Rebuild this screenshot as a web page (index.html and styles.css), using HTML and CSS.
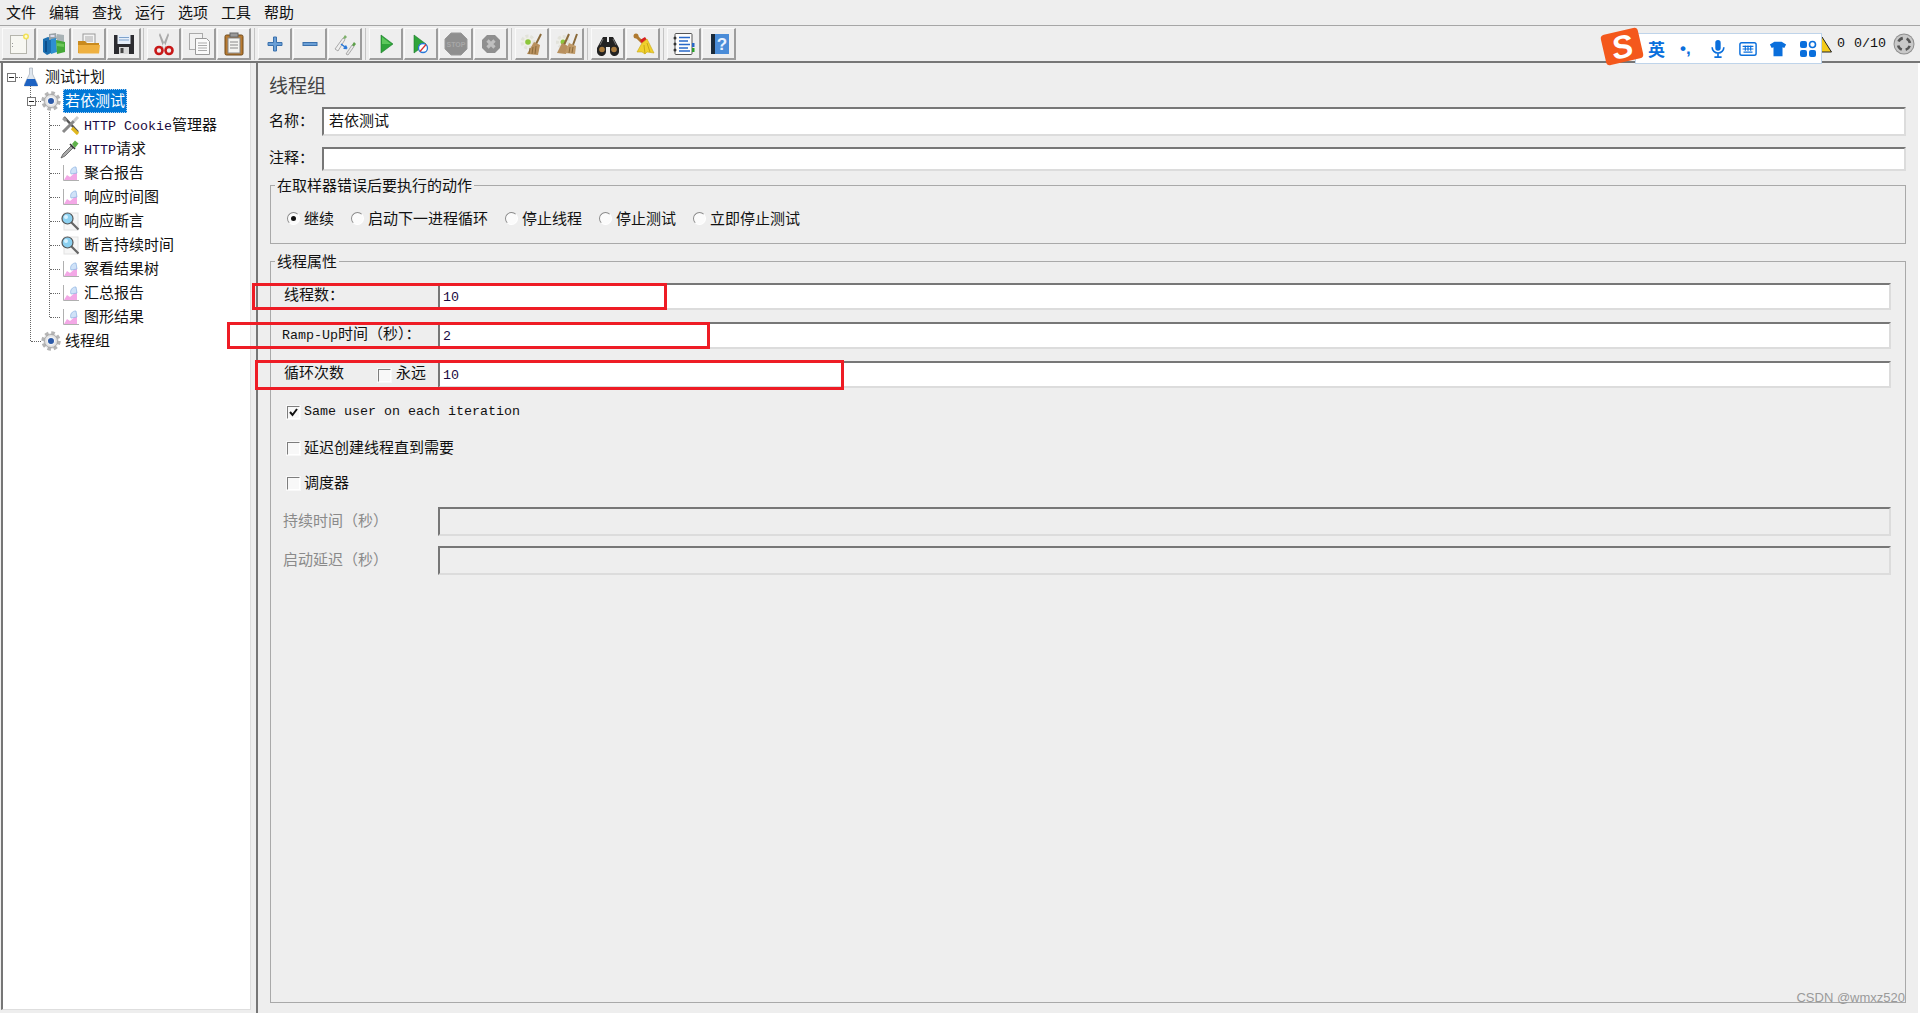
FILE: index.html
```html
<!DOCTYPE html>
<html lang="zh-CN">
<head>
<meta charset="utf-8">
<title>线程组</title>
<link rel="stylesheet" href="styles.css">
</head>
<body>
<svg class="defs" width="0" height="0" aria-hidden="true">
  <defs>
    <symbol id="i-new" viewBox="0 0 24 24"><rect x="3.5" y="3.5" width="16" height="18" fill="#f7f7f2" stroke="#b5b5ad"/><rect x="5" y="11" width="1" height="1" fill="#999"/><rect x="5" y="14" width="1" height="1" fill="#999"/><circle cx="19" cy="4.500" r="3" fill="#f2e25a"/><circle cx="19" cy="4.500" r="1.400" fill="#fffbd0"/></symbol>
    <symbol id="i-templates" viewBox="0 0 24 24"><path d="M1 7l5-2 3 1v15l-4 2-4-3z" fill="#1c6fb0"/><rect x="3" y="9" width="2" height="11" fill="#0d4f8c"/><path d="M7 2l7-1 1 6-8 1z" fill="#9aa3a8"/><rect x="8.500" y="3" width="4" height="2" fill="#dde"/><path d="M15 2l7 1v8l-7-1z" fill="#a8b2b5"/><path d="M9 7l5-1 1 14-6 2z" fill="#2e8fd0"/><path d="M14 8l9 2v10l-8 2z" fill="#46a838"/><path d="M15 11l7 1v3l-7-1z" fill="#6cc858"/></symbol>
    <symbol id="i-open" viewBox="0 0 24 24"><rect x="6" y="2" width="12" height="11" fill="#f4f4f4" stroke="#999"/><path d="M8 5h8M8 7h8M8 9h8" stroke="#aaa"/><path d="M1 9h7l2 2h12v10H1z" fill="#c98a1e"/><path d="M1 13h22l-1 8.500H1.500z" fill="#eeb040"/></symbol>
    <symbol id="i-save" viewBox="0 0 24 24"><path d="M2 3h20v19H2z" fill="#2c2c30"/><rect x="5.500" y="3" width="13" height="9" fill="#e6eef8"/><path d="M7 5.500h10M7 8h10" stroke="#7fa3cc"/><rect x="7" y="15" width="10" height="7" fill="#d8d8d8"/><rect x="8.500" y="16" width="3" height="5" fill="#444"/></symbol>
    <symbol id="i-cut" viewBox="0 0 24 24"><path d="M8 1l6 14-2.500 1L7 3zM16 1l-6 14 2.500 1L17 3z" fill="#a9a9a9"/><circle cx="7" cy="18.500" r="3.500" fill="none" stroke="#c81818" stroke-width="2.600"/><circle cx="17" cy="18.500" r="3.500" fill="none" stroke="#c81818" stroke-width="2.600"/></symbol>
    <symbol id="i-copy" viewBox="0 0 24 24"><rect x="2.500" y="1.500" width="13" height="16" fill="#f2f2f2" stroke="#aaa"/><path d="M8.500 6.500h11l3 3v13h-14z" fill="#fafafa" stroke="#999"/><path d="M11 11h9M11 13.500h9M11 16h9M11 18.500h9" stroke="#aaa"/></symbol>
    <symbol id="i-paste" viewBox="0 0 24 24"><rect x="3" y="3" width="18" height="20" rx="1.500" fill="#b87a30" stroke="#6e4a1c"/><rect x="6" y="6" width="12" height="15" fill="#f4f4f0" stroke="#888"/><rect x="8" y="1" width="8" height="4" fill="#999" stroke="#666"/><path d="M8 10h8M8 13h8M8 16h8" stroke="#888"/></symbol>
    <symbol id="i-plus" viewBox="0 0 24 24"><path d="M10.500 5h3v5.500H19v3h-5.500V19h-3v-5.500H5v-3h5.500z" fill="#6a9fd6" stroke="#3a70ac"/></symbol>
    <symbol id="i-minus" viewBox="0 0 24 24"><rect x="5" y="10.500" width="14" height="3" fill="#6a9fd6" stroke="#3a70ac"/></symbol>
    <symbol id="i-toggle" viewBox="0 0 24 24"><path d="M2 17L10 6l2 1.500L5 19z" fill="#eee" stroke="#aaa"/><path d="M10 6l2-3 2 2-2 2z" fill="#7db06a"/><path d="M13 22l6-9 2 1.500-6 8.500z" fill="#e8e8e8" stroke="#aaa"/><path d="M19 13l2-3 2 2-2 2.500z" fill="#5da04a"/><path d="M8 12l6 4.500M14 16.500l-3.500-.2M14 16.500l-1.500-3" stroke="#2878d8" stroke-width="1.500" fill="none"/></symbol>
    <symbol id="i-play" viewBox="0 0 24 24"><path d="M7 3l12 9-12 9z" fill="#2ea43a" stroke="#1b7a28" stroke-width=".6"/><path d="M8 5l9 7H8z" fill="#5cc85c"/></symbol>
    <symbol id="i-playno" viewBox="0 0 24 24"><path d="M5 3l12 9-12 9z" fill="#2ea43a" stroke="#1b7a28" stroke-width=".6"/><circle cx="14" cy="16" r="4.500" fill="#fff" stroke="#2878d8" stroke-width="1.300"/><path d="M11 19.500l6-7" stroke="#d83030" stroke-width="1.200"/></symbol>
    <symbol id="i-stop" viewBox="0 0 24 24"><path d="M7 1h10l6 6v10l-6 6H7l-6-6V7z" fill="#8f8f8f" stroke="#999"/><text x="12" y="15" text-anchor="middle" class="stop-text">STOP</text></symbol>
    <symbol id="i-shut" viewBox="0 0 24 24"><path d="M8 3h8l5 5v8l-5 5H8l-5-5V8z" fill="#8f8f8f"/><path d="M8.500 8.500l7 7M15.500 8.500l-7 7" stroke="#c0c0c0" stroke-width="3.200"/></symbol>
    <symbol id="i-clear" viewBox="0 0 24 24"><circle cx="8" cy="10" r="6" fill="#eeeee6" stroke="#e2e2da" stroke-width="3" stroke-dasharray="3 2"/><circle cx="8" cy="10" r="2.800" fill="#8cc63a"/><path d="M21 2l-5 10" stroke="#8a6a3a" stroke-width="2"/><path d="M14 10l6 3-2 10-11-1z" fill="#b8905e"/><path d="M10 16l-1 6M13 15l-1 7M16 14l-1 8" stroke="#8a6a3a"/></symbol>
    <symbol id="i-clearall" viewBox="0 0 24 24"><circle cx="8" cy="10" r="5.500" fill="#eeeee6" stroke="#e2e2da" stroke-width="3" stroke-dasharray="3 2"/><circle cx="8" cy="10" r="2.500" fill="#8cc63a"/><path d="M14 2l-5 11M22 2l-4 11" stroke="#8a6a3a" stroke-width="2"/><path d="M7 11l6 3-2 8-9-1z" fill="#b8905e"/><path d="M14 11l7 3-1 8-10-1z" fill="#c09a68"/><path d="M15 15l-1 6M18 15l-1 6" stroke="#8a6a3a"/></symbol>
    <symbol id="i-bino" viewBox="0 0 24 24"><path d="M7 5h4v5h2V5h4l6 11v3a4 4 0 0 1-9 1v-5h-4v5a4 4 0 0 1-9-1v-3z" fill="#222"/><circle cx="6" cy="17.500" r="2.800" fill="#a87a3c"/><circle cx="18" cy="17.500" r="2.800" fill="#a87a3c"/><path d="M7 7l-3 6" stroke="#777"/><path d="M17 7l3 6" stroke="#777"/></symbol>
    <symbol id="i-broom" viewBox="0 0 24 24"><circle cx="5" cy="4" r="2.500" fill="#b07a30"/><path d="M5 4l6 6" stroke="#b07a30" stroke-width="3"/><path d="M9 8l5-3 2 3-5 4z" fill="#d82020"/><path d="M11 11l5-4 7 14-7-1-2 2-3-2-5 0z" fill="#f0d02c" stroke="#c8a818" stroke-width=".6"/><path d="M13 13l1 9M16 11l3 9" stroke="#c8a818"/></symbol>
    <symbol id="i-list" viewBox="0 0 24 24"><rect x="3" y="1.500" width="17" height="21" rx="1" fill="#fdfdfd" stroke="#555"/><path d="M7 5.500h11M7 9h9M7 12.500h11M7 16h9M7 19h11" stroke="#2868c8" stroke-width="1.300"/><circle cx="3" cy="6" r="1.500" fill="#333"/><circle cx="3" cy="12" r="1.500" fill="#333"/><circle cx="3" cy="18" r="1.500" fill="#333"/><rect x="20" y="11" width="2.500" height="4" fill="#2868c8"/><rect x="20" y="16" width="2.500" height="4" fill="#2ca02c"/></symbol>
    <symbol id="i-help" viewBox="0 0 24 24"><rect x="4" y="2" width="18" height="20" fill="#4a8cd8"/><rect x="4" y="2" width="4" height="20" fill="#1a2a3a"/><text x="15" y="18" text-anchor="middle" class="help-text">?</text></symbol>
    <symbol id="t-flask" viewBox="0 0 20 20"><path d="M8.500 1h3v6l5 10v2h-13v-2l5-10z" fill="#dfe6ee" stroke="#9aa4b0" stroke-width=".6"/><path d="M6 12h8l3 7H3z" fill="#1d62c2"/></symbol>
    <symbol id="t-gear" viewBox="0 0 20 20"><circle cx="10" cy="10" r="8" fill="#e6e6e6" stroke="#b4b4b4" stroke-width="3.400" stroke-dasharray="3.500 2.783"/><circle cx="10" cy="10" r="6.500" fill="#e4e4e4" stroke="#a0a0a0" stroke-width=".8"/><circle cx="10" cy="10" r="3.600" fill="#2c5aa8" stroke="#f4f4f4" stroke-width="1.200"/></symbol>
    <symbol id="t-tools" viewBox="0 0 20 20"><path d="M4 2l14 15" stroke="#555" stroke-width="2.400"/><path d="M2 4l3-2 2 3-2 2z" fill="#999"/><path d="M14 6L3 17" stroke="#888" stroke-width="3"/><path d="M14 6l4-4" stroke="#ccc" stroke-width="3"/><path d="M12 13l6 6" stroke="#e0b820" stroke-width="3.200"/></symbol>
    <symbol id="t-pipette" viewBox="0 0 20 20"><path d="M1 19l2-4L11 7l2 2-8 8z" fill="#aaa" stroke="#555" stroke-width=".8"/><path d="M12 5l3-3.500 3.500 3L15 9z" fill="#5eb04a"/><path d="M10 5l5 5" stroke="#333" stroke-width="1.600"/></symbol>
    <symbol id="t-graph" viewBox="0 0 20 20"><path d="M3.500 2v15.500H19" fill="none" stroke="#b0b0b0"/><path d="M4 17l3-5 3 2 7-6v9z" fill="#f3a8e6"/><path d="M11 11a5 5 0 0 1 5-7l1 6z" fill="#cfe2f8" stroke="#8ab0e0" stroke-width=".7"/></symbol>
    <symbol id="t-lens" viewBox="0 0 20 20"><rect x="4" y="2" width="14" height="17" fill="#f6f6f6" stroke="#e2e2e2"/><path d="M11 11l7.500 7.500" stroke="#666" stroke-width="2.200"/><circle cx="7.500" cy="7.500" r="5.500" fill="#8cd0f0" stroke="#555" stroke-width="1.200"/><circle cx="6" cy="6" r="2" fill="#d8f2ff"/></symbol>
    <symbol id="s-warn" viewBox="0 0 20 17"><path d="M10 1l9.500 15H.5z" fill="#f5cb1a" stroke="#222"/></symbol>
    <symbol id="s-zoom" viewBox="0 0 22 22"><circle cx="11" cy="11" r="10.500" fill="#8e8e8e"/><circle cx="11" cy="11" r="9.500" fill="#c8c8c8"/><circle cx="11" cy="11" r="6" fill="none" stroke="#555" stroke-width="2.600" stroke-dasharray="5.400 4.025" stroke-dashoffset="7.400"/></symbol>
    <symbol id="m-check" viewBox="0 0 13 13"><path d="M3 6l2.500 3L10 3" fill="none" stroke="#111" stroke-width="2"/></symbol>
  </defs>
</svg>

<div class="app">
  <nav class="menubar">
    <span>文件</span><span>编辑</span><span>查找</span><span>运行</span><span>选项</span><span>工具</span><span>帮助</span>
  </nav>

  <div class="toolbar">
    <div class="tb-group">
      <span class="tb-btn"><svg class="tb-icon"><use href="#i-new"/></svg></span>
      <span class="tb-btn"><svg class="tb-icon"><use href="#i-templates"/></svg></span>
      <span class="tb-btn"><svg class="tb-icon"><use href="#i-open"/></svg></span>
      <span class="tb-btn"><svg class="tb-icon"><use href="#i-save"/></svg></span>
    </div>
    <i class="tb-sep tb-sep-first"></i>
    <div class="tb-group">
      <span class="tb-btn"><svg class="tb-icon"><use href="#i-cut"/></svg></span>
      <span class="tb-btn"><svg class="tb-icon"><use href="#i-copy"/></svg></span>
      <span class="tb-btn"><svg class="tb-icon"><use href="#i-paste"/></svg></span>
    </div>
    <i class="tb-sep"></i>
    <div class="tb-group">
      <span class="tb-btn"><svg class="tb-icon"><use href="#i-plus"/></svg></span>
      <span class="tb-btn"><svg class="tb-icon"><use href="#i-minus"/></svg></span>
      <span class="tb-btn"><svg class="tb-icon"><use href="#i-toggle"/></svg></span>
    </div>
    <i class="tb-sep"></i>
    <div class="tb-group">
      <span class="tb-btn"><svg class="tb-icon"><use href="#i-play"/></svg></span>
      <span class="tb-btn"><svg class="tb-icon"><use href="#i-playno"/></svg></span>
      <span class="tb-btn"><svg class="tb-icon"><use href="#i-stop"/></svg></span>
      <span class="tb-btn"><svg class="tb-icon"><use href="#i-shut"/></svg></span>
    </div>
    <i class="tb-sep"></i>
    <div class="tb-group">
      <span class="tb-btn"><svg class="tb-icon"><use href="#i-clear"/></svg></span>
      <span class="tb-btn"><svg class="tb-icon"><use href="#i-clearall"/></svg></span>
    </div>
    <i class="tb-sep"></i>
    <div class="tb-group">
      <span class="tb-btn"><svg class="tb-icon"><use href="#i-bino"/></svg></span>
      <span class="tb-btn"><svg class="tb-icon"><use href="#i-broom"/></svg></span>
    </div>
    <i class="tb-sep"></i>
    <div class="tb-group">
      <span class="tb-btn"><svg class="tb-icon"><use href="#i-list"/></svg></span>
      <span class="tb-btn"><svg class="tb-icon"><use href="#i-help"/></svg></span>
    </div>
    <div class="status">
      <svg class="st-warn"><use href="#s-warn"/></svg>
      <span class="lat st-count">0</span>
      <span class="lat st-threads">0/10</span>
      <svg class="st-zoom"><use href="#s-zoom"/></svg>
    </div>
  </div>

  <div class="main">
    <aside class="tree">
      <ul class="tree-list">
        <li>
          <div class="row row-root"><b class="toggle"></b><svg class="t-icon"><use href="#t-flask"/></svg><span class="t-label">测试计划</span></div>
          <ul class="tree-list lvl1">
            <li>
              <div class="row"><b class="toggle"></b><svg class="t-icon"><use href="#t-gear"/></svg><span class="t-label t-selected">若依测试</span></div>
              <ul class="tree-list lvl2">
                <li><div class="row"><b class="no-toggle"></b><svg class="t-icon"><use href="#t-tools"/></svg><span class="t-label"><span class="lat lat-tree">HTTP Cookie</span>管理器</span></div></li>
                <li><div class="row"><b class="no-toggle"></b><svg class="t-icon"><use href="#t-pipette"/></svg><span class="t-label"><span class="lat lat-tree">HTTP</span>请求</span></div></li>
                <li><div class="row"><b class="no-toggle"></b><svg class="t-icon"><use href="#t-graph"/></svg><span class="t-label">聚合报告</span></div></li>
                <li><div class="row"><b class="no-toggle"></b><svg class="t-icon"><use href="#t-graph"/></svg><span class="t-label">响应时间图</span></div></li>
                <li><div class="row"><b class="no-toggle"></b><svg class="t-icon"><use href="#t-lens"/></svg><span class="t-label">响应断言</span></div></li>
                <li><div class="row"><b class="no-toggle"></b><svg class="t-icon"><use href="#t-lens"/></svg><span class="t-label">断言持续时间</span></div></li>
                <li><div class="row"><b class="no-toggle"></b><svg class="t-icon"><use href="#t-graph"/></svg><span class="t-label">察看结果树</span></div></li>
                <li><div class="row"><b class="no-toggle"></b><svg class="t-icon"><use href="#t-graph"/></svg><span class="t-label">汇总报告</span></div></li>
                <li><div class="row"><b class="no-toggle"></b><svg class="t-icon"><use href="#t-graph"/></svg><span class="t-label">图形结果</span></div></li>
              </ul>
            </li>
            <li><div class="row"><b class="no-toggle"></b><svg class="t-icon"><use href="#t-gear"/></svg><span class="t-label">线程组</span></div></li>
          </ul>
        </li>
      </ul>
    </aside>

    <section class="panel">
      <h1 class="title">线程组</h1>
      <div class="field field-name"><label class="field-label">名称：</label><div class="input">若依测试</div></div>
      <div class="field field-note"><label class="field-label">注释：</label><div class="input"></div></div>

      <fieldset class="group group-error">
        <legend>在取样器错误后要执行的动作</legend>
        <div class="radios">
          <span class="radio-item"><i class="radio radio-on"></i>继续</span>
          <span class="radio-item"><i class="radio"></i>启动下一进程循环</span>
          <span class="radio-item"><i class="radio"></i>停止线程</span>
          <span class="radio-item"><i class="radio"></i>停止测试</span>
          <span class="radio-item"><i class="radio"></i>立即停止测试</span>
        </div>
      </fieldset>

      <fieldset class="group group-props">
        <legend>线程属性</legend>
        <div class="prop"><span class="prop-label">线程数：</span><div class="input input-num lat">10</div></div>
        <div class="prop"><span class="prop-label prop-ramp"><span class="lat">Ramp-Up</span>时间（秒）：</span><div class="input input-num lat">2</div></div>
        <div class="prop"><span class="prop-label prop-loop">循环次数<span class="forever"><i class="check"></i>永远</span></span><div class="input input-num lat">10</div></div>
        <div class="check-row check-same"><i class="check check-on"><svg class="check-mark"><use href="#m-check"/></svg></i><span class="lat">Same user on each iteration</span></div>
        <div class="check-row check-delay"><i class="check"></i>延迟创建线程直到需要</div>
        <div class="check-row check-sched"><i class="check"></i>调度器</div>
        <div class="prop prop-disabled prop-duration"><span class="prop-label">持续时间（秒）</span><div class="input input-off"></div></div>
        <div class="prop prop-disabled prop-startup"><span class="prop-label">启动延迟（秒）</span><div class="input input-off"></div></div>
      </fieldset>
    </section>
  </div>

  <div class="mark mark-a"></div>
  <div class="mark mark-b"></div>
  <div class="mark mark-c"></div>

  <div class="ime">
    <span class="ime-logo"><span class="ime-s">S</span></span>
    <span class="ime-lang">英</span>
    <span class="ime-punct">•,</span>
    <svg class="ime-icon" viewBox="0 0 18 20"><rect x="6" y="0" width="6" height="12" rx="3" fill="#0a6fdc"/><path d="M2.500 8a6.500 6.500 0 0 0 13 0M9 15v3M5 19h8" fill="none" stroke="#0a6fdc" stroke-width="1.800"/></svg>
    <svg class="ime-icon" viewBox="0 0 20 18"><rect x="1" y="2" width="18" height="14" rx="2" fill="none" stroke="#0a6fdc" stroke-width="1.600"/><path d="M4 6h12M4 9h12M5 12.500h10M7 5v6M10 5v6M13 5v6" stroke="#0a6fdc" stroke-width="1.300"/></svg>
    <svg class="ime-icon" viewBox="0 0 20 18"><path d="M6 1h8l5 3-2 4-2-1v10H5V7L3 8 1 4z" fill="#0a6fdc"/></svg>
    <svg class="ime-icon" viewBox="0 0 18 18"><rect x="1" y="1" width="7" height="7" rx="2" fill="#0a6fdc"/><rect x="10.500" y="1.500" width="6" height="6" rx="3" fill="none" stroke="#0a6fdc" stroke-width="1.600"/><rect x="1" y="10" width="7" height="7" rx="2" fill="#0a6fdc"/><rect x="10" y="10" width="7" height="7" rx="2" fill="#0a6fdc"/></svg>
  </div>

  <div class="watermark">CSDN @wmxz520</div>
</div>
</body>
</html>
```

FILE: styles.css
```css
* { box-sizing: border-box; }
html, body { margin: 0; padding: 0; }
body {
  background: #eeeeee;
  color: #111;
  font: 15px/20px "Liberation Mono", "Noto Sans CJK SC", monospace;
  overflow: hidden;
}
ul { list-style: none; margin: 0; padding: 0; }
.defs { position: absolute; }
.stop-text { font: bold 7px "Liberation Sans", sans-serif; fill: #a8a8a8; }
.help-text { font: bold 17px "Liberation Sans", sans-serif; fill: #e8f2ff; }

.app { position: relative; width: 1920px; height: 1013px; display: flex; flex-direction: column; overflow: hidden; }
.lat { font-size: 13.33px; }

/* menu */
.menubar {
  height: 26px; flex: none; display: flex; gap: 13px; padding-left: 6px;
  line-height: 29px; border-bottom: 1px solid #a6a6a6;
}

/* toolbar */
.toolbar {
  height: 37px; flex: none; display: flex; align-items: flex-start;
  padding: 2px 0 0 2px; border-bottom: 2px solid #767676;
}
.tb-group { display: flex; gap: 1px; }
.tb-btn {
  width: 34px; height: 32px; display: flex; align-items: center; justify-content: center;
  background: #eeeeee;
  border-top: 1px solid #fafafa; border-left: 1px solid #fafafa;
  border-right: 2px solid #9c9c9c; border-bottom: 2px solid #9c9c9c;
}
.tb-icon { width: 24px; height: 24px; }
.tb-sep { width: 1px; height: 32px; margin: 0 3px; background: #c4c4c4; }
.tb-sep-first { margin-left: 2px; }
.status { margin-left: auto; height: 32px; display: flex; align-items: center; padding-right: 5px; }
.st-warn { width: 20px; height: 17px; margin-right: 5px; flex: none; }
.st-count { width: 8px; margin-right: 9px; }
.st-threads { width: 32px; margin-right: 7px; }
.st-zoom { width: 22px; height: 22px; }

/* main split */
.main { flex: 1; min-height: 0; display: flex; border-right: 2px solid #fff; }
.tree {
  width: 250px; margin: 0 5px 3px 1px; flex: none; background: #fff;
  border-left: 2px solid #767676; border-right: 1px solid #dedede; border-bottom: 1px solid #dedede;
  padding-top: 2px;
}
.tree-list { position: relative; }
.lvl1 { padding-left: 20px; }
.lvl1::before {
  content: ""; position: absolute; left: 27px; top: -3px; bottom: 12px;
  border-left: 1px dotted #666;
}
.lvl2 { padding-left: 19px; }
.lvl2::before {
  content: ""; position: absolute; left: 26px; top: -1px; bottom: 12px;
  border-left: 1px dotted #666;
}
.row { position: relative; height: 24px; display: flex; align-items: center; padding-left: 4px; white-space: nowrap; }
.row::before {
  content: ""; position: absolute; left: 8px; width: 10px; top: 12px;
  border-top: 1px dotted #666;
}
.row-root::before { left: 13px; width: 6px; }
.toggle {
  position: relative; width: 9px; height: 9px; flex: none; margin-right: 5px;
  background: #fff; border: 1px solid #777;
}
.toggle::after { content: ""; position: absolute; left: 1px; right: 1px; top: 3px; height: 1px; background: #222; }
.no-toggle { width: 9px; height: 9px; flex: none; margin-right: 5px; }
.t-icon { position: relative; width: 20px; height: 20px; flex: none; }
.t-label { margin-left: 2px; padding: 0 2px; line-height: 27px; height: 24px; }
.lat-tree { color: #1a0a40; }
.t-selected { background: #0078d7; color: #fff; outline: 1px dotted #b8d4f0; outline-offset: -1px; }

/* right panel */
.panel {
  flex: 1; min-width: 0; display: flex; flex-direction: column;
  padding: 12px 12px 10px 11px; border-left: 2px solid #767676;
}
.title { margin: 0 0 8px; height: 24px; font-size: 19px; line-height: 27px; font-weight: 400; color: #444; }
.field { display: flex; }
.field-name { height: 29px; }
.field-note { height: 24px; margin-top: 11px; }
.field-label { width: 53px; flex: none; line-height: 32px; }
.field-note .field-label { line-height: 25px; }
.input {
  flex: 1; min-width: 0; background: #fff; padding: 0 5px; line-height: 27px;
  border-top: 2px solid #777; border-left: 2px solid #777;
  border-right: 2px solid #dcdcdc; border-bottom: 2px solid #dcdcdc;
}
.group { margin: 0 0 0 1px; min-width: 0; border: 1px solid #a9a9a9; }
.group legend { padding: 0 2px; height: 20px; line-height: 25px; }
.group-error { margin-top: 4px; padding: 13px 0 15px 16px; }
.group-error legend { margin-left: -12px; }
.group-props { margin-top: 7px; flex: 1; padding: 12px 14px 0 13px; }
.group-props legend { margin-left: -9px; }

.radios { display: flex; gap: 17px; height: 20px; }
.radio-item { display: flex; align-items: flex-start; gap: 4px; line-height: 25px; }
.radio {
  position: relative; width: 13px; height: 13px; flex: none; margin-top: 4px; border-radius: 50%; background: #fbfbfb;
  border: 1px solid #8a8a8a; border-right-color: #fff; border-bottom-color: #fff;
}
.radio-on::after {
  content: ""; position: absolute; left: 3px; top: 3px; width: 5px; height: 5px;
  border-radius: 50%; background: #111;
}

.prop { display: flex; height: 27px; margin-bottom: 12px; }
.prop-label { width: 154px; flex: none; line-height: 28px; white-space: nowrap; }
.prop-ramp { margin-left: -2px; width: 156px; }
.prop-loop { display: flex; }
.forever { display: flex; align-items: center; gap: 5px; margin-left: 34px; height: 28px; }
.input-num { color: #1a0a40; padding-left: 3px; line-height: 25px; }
.check {
  position: relative; width: 13px; height: 13px; flex: none; display: block; background: #f8f8f8;
  border: 1px solid #7d7d7d; border-right-color: #fff; border-bottom-color: #fff;
  outline: 1px solid #f8f8f8;
}
.check-mark { position: absolute; left: -1px; top: -1px; width: 13px; height: 13px; }
.check-row { display: flex; align-items: flex-start; gap: 4px; height: 20px; padding-left: 3px; line-height: 23px; }
.check-row .check { margin-top: 4px; }
.check-same { margin-top: 14px; line-height: 20px; }
.check-delay { margin-top: 16px; }
.check-sched { margin-top: 15px; }
.prop-disabled { height: 29px; color: #8a8a8a; margin-bottom: 0; }
.prop-disabled .prop-label { line-height: 31px; margin-left: -1px; width: 155px; }
.prop-duration { margin-top: 14px; }
.prop-startup { margin-top: 10px; }
.input-off { background: #eeeeee; }

/* red annotation boxes over the form */
.mark { position: absolute; border: 3px solid #ee1c25; }
.mark-a { left: 252px; top: 283px; width: 415px; height: 27px; }
.mark-b { left: 227px; top: 322px; width: 483px; height: 27px; }
.mark-c { left: 255px; top: 360px; width: 589px; height: 30px; }

/* floating input-method bar */
.ime {
  position: absolute; left: 1635px; top: 33px; width: 187px; height: 31px;
  display: flex; align-items: center; background: #fff; border: 1px solid #bfd4ea; color: #0a6fdc;
}
.ime-logo {
  position: absolute; left: -33px; top: -3px; width: 38px; height: 31px; border-radius: 4px;
  background: #f4581c; transform: rotate(-13deg); display: flex; align-items: center; justify-content: center;
}
.ime-s { color: #fff; font: italic bold 32px/30px "Liberation Sans", sans-serif; }
.ime-lang { margin-left: 12px; width: 18px; font-weight: 700; font-size: 17px; font-family: "Noto Sans CJK SC", sans-serif; }
.ime-punct { margin-left: 14px; width: 16px; font: bold 17px/20px "Liberation Sans", sans-serif; }
.ime-icon { width: 18px; height: 18px; margin-left: 12px; flex: none; }
.ime-punct + .ime-icon { margin-left: 13px; }

.watermark {
  position: absolute; right: 15px; top: 990px;
  font: 13px/16px "Liberation Sans", sans-serif; color: #9a9a9a;
}
```
